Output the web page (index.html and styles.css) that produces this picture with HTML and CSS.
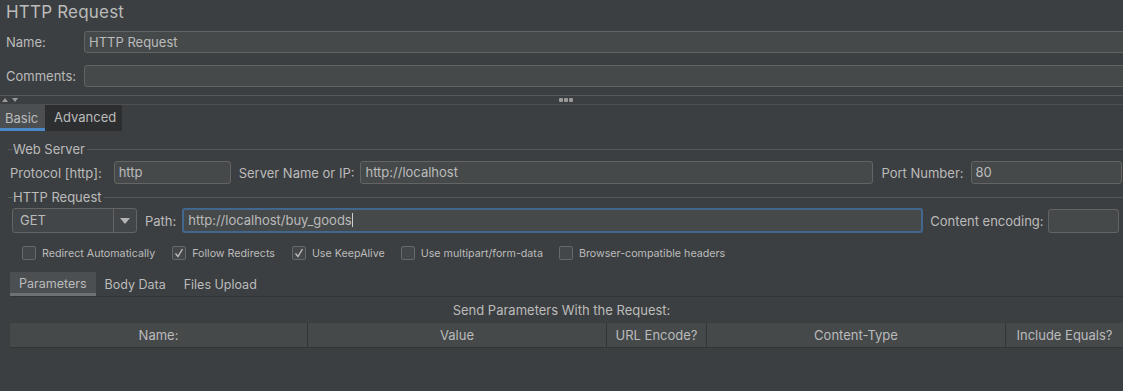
FILE: index.html
```html
<!DOCTYPE html>
<html>
<head>
<meta charset="utf-8">
<link rel="stylesheet" href="styles.css">
</head>
<body>
<div class="page">
  <div class="title">HTTP Request</div>
  <div class="frow name-row">
    <span class="lbl w78">Name:</span>
    <div class="input wide">HTTP Request</div>
  </div>
  <div class="frow comments-row">
    <span class="lbl w78">Comments:</span>
    <div class="input wide"></div>
  </div>
  <div class="splitter">
    <div class="arrows">
      <svg width="20" height="6" viewBox="0 0 20 6"><path d="M2 5 L5 1 L8 5 Z" fill="#9a9a9a"/><path d="M12 1 L18 1 L15 5 Z" fill="#9a9a9a"/></svg>
    </div>
    <div class="dots"><i></i><i></i><i></i></div>
  </div>
  <div class="tabs">
    <div class="tab active">Basic</div>
    <div class="tab dark">Advanced</div>
  </div>
  <div class="panel">
    <div class="group-head"><span class="dash"></span><span class="gtitle">Web Server</span><span class="gline"></span></div>
    <div class="frow server-row">
      <span class="lbl">Protocol [http]:</span>
      <div class="input proto">http</div>
      <span class="lbl">Server Name or IP:</span>
      <div class="input server">http://localhost</div>
      <span class="lbl">Port Number:</span>
      <div class="input port">80</div>
    </div>
    <div class="group-head second"><span class="dash"></span><span class="gtitle">HTTP Request</span><span class="gline"></span></div>
    <div class="frow req-row">
      <div class="combo"><span class="cval">GET</span><span class="carrow"><svg width="10" height="6" viewBox="0 0 10 6"><path d="M0 0 L10 0 L5 6 Z" fill="#b4b4b4"/></svg></span></div>
      <span class="lbl">Path:</span>
      <div class="input path focus">http://localhost/buy_goods<span class="caret"></span></div>
      <span class="lbl">Content encoding:</span>
      <div class="input enc"></div>
    </div>
    <div class="checks">
      <label class="chk c-redirect"><span class="box"></span>Redirect Automatically</label>
      <label class="chk c-follow"><span class="box"><svg width="12" height="12" viewBox="0 0 12 12"><path d="M2.5 6.5 L5 9.5 L9.5 2" fill="none" stroke="#bdbdbd" stroke-width="1.4"/></svg></span>Follow Redirects</label>
      <label class="chk c-keep"><span class="box"><svg width="12" height="12" viewBox="0 0 12 12"><path d="M2.5 6.5 L5 9.5 L9.5 2" fill="none" stroke="#bdbdbd" stroke-width="1.4"/></svg></span>Use KeepAlive</label>
      <label class="chk c-multi"><span class="box"></span>Use multipart/form-data</label>
      <label class="chk"><span class="box"></span>Browser-compatible headers</label>
    </div>
    <div class="subtabs">
      <div class="stab active">Parameters</div>
      <div class="stab">Body Data</div>
      <div class="stab">Files Upload</div>
    </div>
    <div class="send">Send Parameters With the Request:</div>
    <div class="thead">
      <div class="th c1">Name:</div>
      <div class="th c2">Value</div>
      <div class="th c3">URL Encode?</div>
      <div class="th c4">Content-Type</div>
      <div class="th c5">Include Equals?</div>
    </div>
  </div>
</div>
</body>
</html>
```

FILE: styles.css
```css
* { box-sizing: border-box; }
html, body { margin: 0; padding: 0; }
body {
  background: #3c3f41;
  color: #bbbbbb;
  font-family: Inter, "Noto Sans", sans-serif;
  font-size: 13px;
  width: 1123px;
  height: 391px;
  overflow: hidden;
}
.page { width: 1123px; }
.title {
  height: 31px;
  padding: 1px 0 0 6px;
  font-size: 17px;
  line-height: 22px;
  letter-spacing: 0.2px;
}
.frow { display: flex; align-items: center; }
.lbl { white-space: nowrap; }
.w78 { width: 78px; flex: none; }
.name-row { padding-left: 6px; height: 22px; }
.comments-row { padding-left: 6px; height: 22px; margin-top: 12px; }
.input {
  height: 22px;
  background: #45494a;
  border: 1px solid #646464;
  border-radius: 3px;
  padding: 0 4px;
  line-height: 20px;
  white-space: nowrap;
  flex: none;
}
.wide { width: 1060px; }
.splitter {
  margin-top: 8px;
  height: 10px;
  border-top: 1px solid #555759;
  border-bottom: 1px solid #4e5052;
  position: relative;
  display: flex;
  align-items: center;
  justify-content: center;
}
.arrows { position: absolute; left: 0; top: 1px; line-height: 0; }
.dots { display: flex; gap: 1px; margin-left: 9px; }
.dots i { width: 4px; height: 4px; border-radius: 1px; background: #9a9a9a; display: block; }
.tabs { display: flex; height: 26px; }
.tab { padding: 0 5px; line-height: 25px; height: 26px; }
.tab.active { background: #4b4f51; border-bottom: 3px solid #4a88c7; line-height: 26px; width: 45px; }
.tab.dark { background: #2c2e30; padding: 0 9px 0 9px; width: 77px; }
.panel { padding: 10px 0 0 0; }
.group-head { display: flex; align-items: center; height: 16px; }
.group-head.second { margin-top: 5px; }
.dash { width: 5px; height: 1px; background: #545658; margin-left: 8px; }
.gtitle { padding: 0 2px 0 0; }
.gline { flex: 1; height: 1px; background: #545658; }
.server-row { margin-top: 4px; height: 23px; padding-left: 10px; }
.server-row .input { height: 23px; }
.proto { width: 117px; margin-left: 12px; margin-right: 8px; }
.server { width: 513px; margin-left: 6px; margin-right: 8px; }
.port { width: 151px; margin-left: 7px; }
.req-row { margin-top: 3px; height: 25px; padding-left: 12px; }
.combo {
  width: 125px; height: 25px;
  border: 1px solid #646464;
  border-radius: 3px;
  background: #434648;
  display: flex;
  flex: none;
  margin-right: 8px;
}
.cval { flex: 1; padding-left: 7px; line-height: 23px; border-right: 1px solid #646464; }
.carrow { width: 22px; display: flex; align-items: center; justify-content: center; }
.path { width: 741px; height: 25px; margin-left: 6px; margin-right: 7px; }
.focus { border: 2px solid #41678f; line-height: 21px; padding-left: 4px; }
.caret { display: inline-block; width: 1px; height: 14px; background: #cfcfcf; vertical-align: -2px; }
.enc { width: 71px; height: 24px; margin-left: 4px; }
.checks { display: flex; align-items: center; height: 14px; margin-top: 13px; font-size: 10.7px; padding-left: 22px; }
.chk { display: flex; align-items: center; margin-right: 18px; white-space: nowrap; }
.c-redirect { margin-right: 17px; }
.c-follow { margin-right: 17px; }
.c-keep { margin-right: 16px; }
.c-multi { margin-right: 16px; }
.box {
  width: 14px; height: 14px;
  border: 1px solid #666869;
  border-radius: 2px;
  background: #43474a;
  margin-right: 6px;
  display: flex; align-items: center; justify-content: center;
}
.subtabs { display: flex; margin: 12px 0 0 10px; height: 25px; border-bottom: 1px solid #323435; font-size: 12.5px; }
.stab { padding: 0 9px; line-height: 25px; }
.stab.active { background: #4b4f51; border-bottom: 3px solid #6e7173; line-height: 24px; padding: 0 9px; }
.send { height: 26px; line-height: 26px; text-align: center; }
.thead { display: flex; margin-left: 10px; height: 25px; background: #45494a; border-bottom: 1px solid #323435; overflow: hidden; }
.th { text-align: center; line-height: 24px; border-right: 1px solid #323435; white-space: nowrap; flex: none; }
.c1 { width: 298px; }
.c2 { width: 299px; }
.c3 { width: 100px; }
.c4 { width: 299px; }
.c5 { width: 117px; border-right: none; }
```
